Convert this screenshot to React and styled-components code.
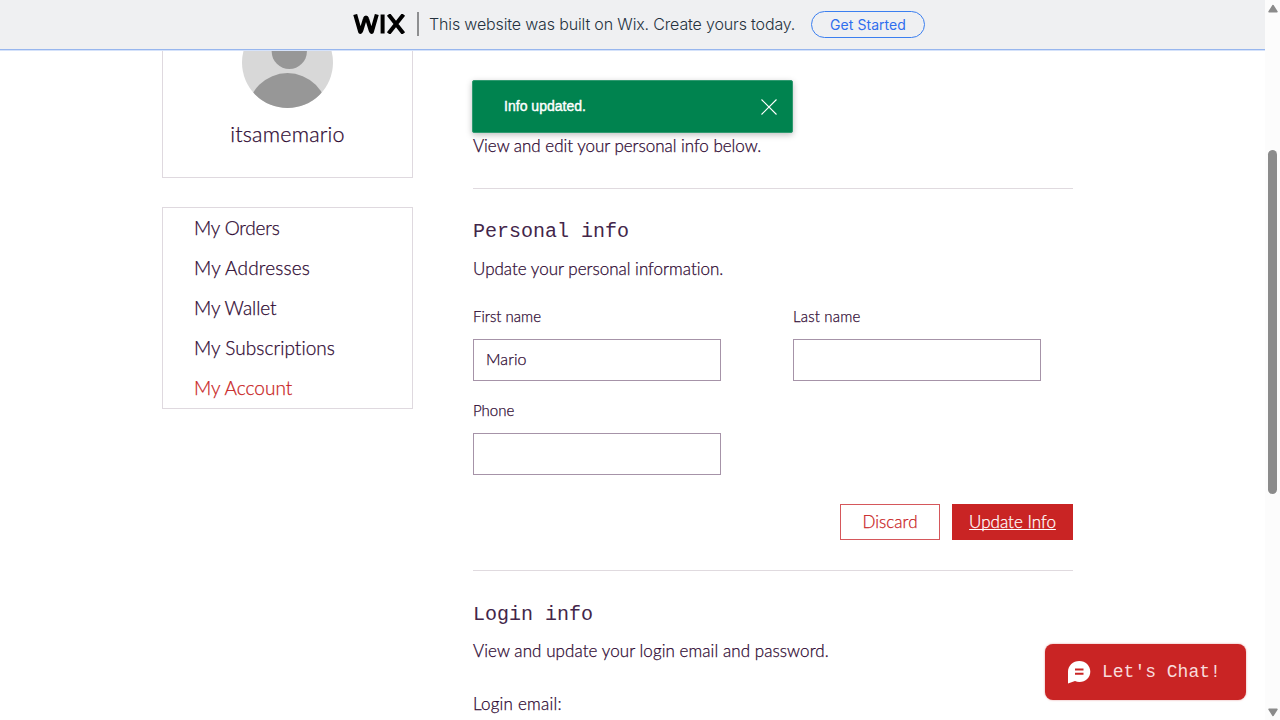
import React from "react";
import styled, { createGlobalStyle } from "styled-components";

const GlobalStyle = createGlobalStyle`
  * { box-sizing: border-box; }
  body { margin: 0; overflow: hidden; background: #fff; }
`;

const ink = "#2f0a33";
const red = "#c92424";

const Window = styled.div`
  display: flex;
  width: 1280px;
  height: 720px;
  overflow: hidden;
  position: relative;
`;

const Page = styled.div`
  flex: 1;
  display: flex;
  flex-direction: column;
  overflow: hidden;
`;

/* top banner */
const Banner = styled.header`
  flex: none;
  display: flex;
  align-items: center;
  height: 51px;
  padding: 0 0 2px 353px;
  background: #eff0f2;
  border-bottom: 1px solid #d5e2fa;
  box-shadow: inset 0 -1px 0 #97b6ee;
  font-family: Inter, "Liberation Sans", sans-serif;
`;

const Logo = styled.svg`
  display: block;
  flex: none;
`;

const BannerRule = styled.span`
  width: 2px;
  height: 24px;
  margin: 0 10px 0 11px;
  background: #8e8f91;
`;

const BannerText = styled.span`
  width: 367px;
  white-space: nowrap;
  font-size: 16px;
  font-weight: 350;
  letter-spacing: -0.15px;
  color: #25323e;
`;

const StartButton = styled.button`
  width: 114px;
  height: 27px;
  margin-left: 15px;
  padding: 1px 0 0;
  border: 1px solid #3b7ff0;
  border-radius: 14px;
  background: transparent;
  font: 400 14px Inter, "Liberation Sans", sans-serif;
  letter-spacing: 0.06px;
  color: #2f6eee;
`;

/* page body */
const Columns = styled.div`
  display: flex;
  gap: 59px;
  padding-left: 162px;
`;

const Sidebar = styled.aside`
  width: 251px;
  display: flex;
  flex-direction: column;
  gap: 29px;
`;

const Text = styled.span`
  font-family: Lato, "Liberation Sans", sans-serif;
  font-weight: 300;
  font-size: ${(p) => p.$size || 17}px;
  line-height: ${(p) => p.$line || 20}px;
  letter-spacing: ${(p) => p.$track || 0}px;
  font-variant-ligatures: none;
  color: ${(p) => p.$color || ink};
  -webkit-text-stroke: 0.25px ${(p) => p.$color || ink};
  text-decoration: ${(p) => (p.$underline ? "underline" : "none")};
  text-decoration-skip-ink: none;
  white-space: nowrap;
`;

const ProfileCard = styled.section`
  display: flex;
  flex-direction: column;
  align-items: center;
  height: 127px;
  border: 1px solid #dfd9df;
  border-top: 0;
`;

const Avatar = styled.svg`
  display: block;
  margin-bottom: 14px;
`;

const Menu = styled.nav`
  display: flex;
  flex-direction: column;
  height: 202px;
  padding-left: 31px;
  border: 1px solid #dfd9df;
`;

const MenuItem = styled.a`
  display: flex;
  align-items: center;
  height: 40px;
`;

const Main = styled.main`
  width: 601px;
  padding-top: 29px;
  display: flex;
  flex-direction: column;
`;

const Toast = styled.div`
  display: flex;
  align-items: center;
  justify-content: space-between;
  width: 321px;
  height: 53px;
  padding: 0 15px 0 31px;
  background: #00834f;
  border: 1px solid #2f9a70;
  border-radius: 2px;
  box-shadow: 0 2px 6px rgba(0, 0, 0, 0.25);
`;

const ToastText = styled.span`
  font: 400 14px/18px "Liberation Sans", Arial, sans-serif;
  letter-spacing: 0.02px;
  color: #fff;
  -webkit-text-stroke: 0.4px #fff;
  padding-bottom: 1px;
`;

const Section = styled.section`
  display: flex;
  flex-direction: column;
  align-items: flex-start;
  width: 601px;
  padding-left: 1px;
`;

const Rule = styled.hr`
  width: 600px;
  height: 1px;
  margin: 0;
  border: 0;
  background: #e0dadf;
`;

const Heading = styled.h2`
  margin: 0;
  font: 400 20px/24px "Liberation Mono", "Courier New", monospace;
  color: #43264a;
`;

const Fields = styled.div`
  display: grid;
  grid-template-columns: 248px 248px;
  column-gap: 72px;
  row-gap: 19px;
`;

const Field = styled.label`
  display: flex;
  flex-direction: column;
  gap: 13px;
`;

const Input = styled.span`
  display: flex;
  align-items: center;
  height: 42px;
  padding: 0 12px 2px;
  border: 1px solid #a693a8;
`;

const Actions = styled.div`
  display: flex;
  gap: 12px;
  align-self: flex-end;
`;

const Button = styled.button`
  display: flex;
  align-items: center;
  justify-content: center;
  width: ${(p) => p.$width}px;
  height: 36px;
  padding: 0;
  border: 1px solid ${(p) => (p.$solid ? red : "#d5575b")};
  background: ${(p) => (p.$solid ? red : "#fff")};
`;

const Gap = styled.div`
  height: ${(p) => p.$h}px;
`;

/* floating chat */
const Chat = styled.button`
  position: absolute;
  left: 1045px;
  top: 644px;
  display: flex;
  align-items: center;
  gap: 11px;
  width: 201px;
  height: 56px;
  padding: 0 0 0 22px;
  border: 0;
  border-radius: 8px;
  background: ${red};
  box-shadow: 0 0 2px rgba(201, 36, 36, 0.5);
  color: #f8dcdc;
  font: 400 18px "Liberation Mono", "Courier New", monospace;
`;

const Scrollbar = styled.div`
  flex: none;
  width: 15px;
  padding-top: 4px;
  background: #fcfcfc;
  display: flex;
  flex-direction: column;
  align-items: center;
`;

const Thumb = styled.div`
  width: 9px;
  height: 344px;
  margin: 137px 0 214px;
  border-radius: 5px;
  background: #8b8b8b;
`;

export default function App() {
  return (
    <Window>
      <GlobalStyle />
      <Page>
        <Banner>
          <Logo width="53" height="20" viewBox="0 0 53 20">
            <g fill="none" stroke="#000" strokeWidth="4" strokeLinejoin="round" strokeLinecap="butt">
              <path d="M2.2 0.5 L7.2 18 C7.8 18 8.1 17.3 8.5 16 L12 4.5 C12.4 3 13.6 3 14 4.5 L17.5 16 C17.9 17.3 18.2 18 18.8 18 L23.8 0.5" />
              <path d="M29.6 0.5 V19.5" />
              <path d="M35.5 0.5 L50.5 19.5 M50.5 0.5 L35.5 19.5" />
            </g>
          </Logo>
          <BannerRule />
          <BannerText>This website was built on Wix. Create yours today.</BannerText>
          <StartButton>Get Started</StartButton>
        </Banner>
        <Columns>
          <Sidebar>
            <ProfileCard>
              <Avatar width="91" height="57" viewBox="242 51 91 57">
                <clipPath id="face"><circle cx="287.5" cy="62.5" r="45.5" /></clipPath>
                <g clipPath="url(#face)">
                  <rect x="242" y="17" width="91" height="91" fill="#d8d8d8" />
                  <circle cx="289.3" cy="51.4" r="17.6" fill="#979797" />
                  <circle cx="287.5" cy="113" r="39.9" fill="#979797" />
                </g>
              </Avatar>
              <Text $size={21.5} $line={24} $track={0.2}>itsamemario</Text>
            </ProfileCard>
            <Menu>
              <MenuItem><Text $size={19} $track={-0.2}>My Orders</Text></MenuItem>
              <MenuItem><Text $size={19} $track={0.17}>My Addresses</Text></MenuItem>
              <MenuItem><Text $size={19} $track={-0.07}>My Wallet</Text></MenuItem>
              <MenuItem><Text $size={19} $track={0.04}>My Subscriptions</Text></MenuItem>
              <MenuItem><Text $size={19} $color={red}>My Account</Text></MenuItem>
            </Menu>
          </Sidebar>
          <Main>
            <Toast>
              <ToastText>Info updated.</ToastText>
              <svg width="16" height="16" viewBox="0 0 16 16">
                <path d="M0.5 0.5 L15.5 15.5 M15.5 0.5 L0.5 15.5" stroke="#fff" strokeWidth="1.1" />
              </svg>
            </Toast>
            <Section>
              <Gap $h={3} />
              <Text $track={-0.03}>View and edit your personal info below.</Text>
              <Gap $h={32} />
              <Rule />
              <Gap $h={31} />
              <Heading>Personal info</Heading>
              <Gap $h={15} />
              <Text>Update your personal information.</Text>
              <Gap $h={27} />
              <Fields>
                <Field>
                  <Text $size={15}>First name</Text>
                  <Input><Text $size={16} $track={0.1}>Mario</Text></Input>
                </Field>
                <Field>
                  <Text $size={15} $track={0.17}>Last name</Text>
                  <Input />
                </Field>
                <Field>
                  <Text $size={15}>Phone</Text>
                  <Input />
                </Field>
              </Fields>
              <Gap $h={29} />
              <Actions>
                <Button $width={100}><Text $track={0.05} $color={red}>Discard</Text></Button>
                <Button $width={121} $solid><Text $color="#fff" $underline>Update Info</Text></Button>
              </Actions>
              <Gap $h={30} />
              <Rule />
              <Gap $h={32} />
              <Heading>Login info</Heading>
              <Gap $h={14} />
              <Text $track={0.07}>View and update your login email and password.</Text>
              <Gap $h={33} />
              <Text $track={0.22}>Login email:</Text>
            </Section>
          </Main>
        </Columns>
      </Page>
      <Scrollbar>
        <svg width="10" height="9" viewBox="0 0 10 9">
          <path d="M5 1.5 L9 7.7 H1 Z" fill="#8b8b8b" stroke="#8b8b8b" strokeWidth="1.4" strokeLinejoin="round" />
        </svg>
        <Thumb />
        <svg width="10" height="9" viewBox="0 0 10 9">
          <path d="M5 7.5 L9 1.3 H1 Z" fill="#8b8b8b" stroke="#8b8b8b" strokeWidth="1.4" strokeLinejoin="round" />
        </svg>
      </Scrollbar>
      <Chat>
        <svg width="24" height="24" viewBox="0 0 24 24">
          <path d="M12.3 1 C18.5 1 23.3 5.7 23.3 11.5 C23.3 17.4 18.6 22 12.5 22 C10.8 22 9.4 21.6 8 21 L1 23.5 V11.5 C1 5.7 6 1 12.3 1 Z" fill="#fff" />
          <path d="M8 9.5 H16.5 M8 13.7 H16.5" stroke={red} strokeWidth="1.9" />
        </svg>
        Let's Chat!
      </Chat>
    </Window>
  );
}
